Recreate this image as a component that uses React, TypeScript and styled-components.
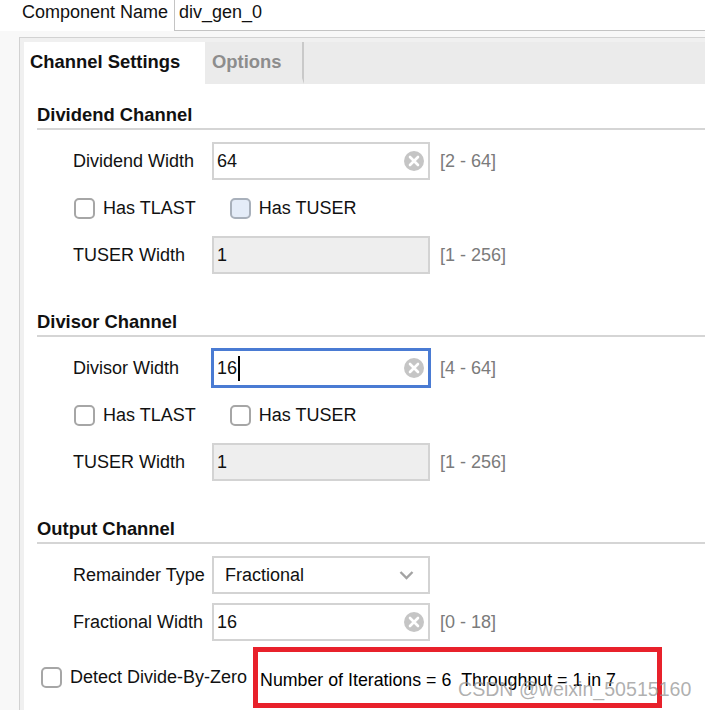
import React from "react";
import styled, { createGlobalStyle } from "styled-components";

const GlobalStyle = createGlobalStyle`
  html, body {
    margin: 0;
    padding: 0;
    background: #f8f8f8;
  }
  body {
    font-family: "Liberation Sans", Arial, sans-serif;
    color: #111;
  }
`;

const Page = styled.div`
  position: relative;
  width: 705px;
  height: 710px;
  overflow: hidden;
  background: #f8f8f8;
`;

const NameRow = styled.div`
  display: flex;
  height: 31px;
  background: #fff;
`;

const NameLabel = styled.div`
  width: 152px;
  padding: 1px 0 0 22px;
  font-size: 18px;
  line-height: 22px;
  white-space: nowrap;
`;

const NameInput = styled.div`
  flex: 1;
  box-sizing: border-box;
  border-left: 1px solid #c4c4c4;
  border-bottom: 1px solid #c4c4c4;
  padding: 1px 0 0 4px;
  font-size: 18px;
  line-height: 22px;
  background: #fff;
`;

const Frame = styled.div`
  margin: 6px 0 0 19px;
  height: 700px;
  border-top: 1px solid #d2d2d2;
  border-left: 1px solid #d2d2d2;
  padding: 4px 0 0 4px;
  background: #f0f0f0;
`;

const TabBar = styled.div`
  display: flex;
  height: 42px;
  background: #ebebeb;
`;

const Tab = styled.div<{ $active?: boolean; $width: number }>`
  width: ${(p) => p.$width}px;
  box-sizing: border-box;
  padding-left: ${(p) => (p.$active ? 6 : 7)}px;
  font-size: 18.4px;
  font-weight: bold;
  line-height: 40px;
  white-space: nowrap;
  background: ${(p) => (p.$active ? "#fff" : "#ebebeb")};
  color: ${(p) => (p.$active ? "#111" : "#8d8d8d")};
  border-right: ${(p) => (p.$active ? "none" : "2px solid #c9c9c9")};
  border-bottom: ${(p) => (p.$active ? "none" : "6px solid #ebebeb")};
`;

const Content = styled.div`
  background: #fff;
  height: 640px;
  padding-left: 13px;
`;

const Section = styled.div`
  padding-top: 37px;
  &:first-child {
    padding-top: 20px;
  }
`;

const Heading = styled.h3`
  margin: 0;
  font-size: 18.4px;
  font-weight: bold;
  line-height: 22px;
  padding-bottom: 2px;
  border-bottom: 2px solid #d5d5d5;
`;

const Fields = styled.div<{ $gap: number }>`
  display: flex;
  flex-direction: column;
  gap: ${(p) => p.$gap}px;
  margin-top: 12px;
  padding-left: 36px;
`;

const FieldRow = styled.div`
  display: flex;
  align-items: center;
  height: 38px;
`;

const Label = styled.div`
  width: 139px;
  font-size: 18px;
  white-space: nowrap;
`;

const Box = styled.div<{ $disabled?: boolean; $focused?: boolean }>`
  display: flex;
  align-items: center;
  box-sizing: border-box;
  width: 218px;
  height: 38px;
  padding: 0 4px 0 3px;
  font-size: 18px;
  border: 2px solid ${(p) => (p.$focused ? "#4a7bd3" : "#d3d3d3")};
  outline: ${(p) => (p.$focused ? "1px solid #4a7bd3" : "none")};
  background: ${(p) => (p.$disabled ? "#eeeeee" : "#fff")};
`;

const SelectBox = styled(Box)`
  padding: 0 14px 0 11px;
  justify-content: space-between;
`;

const Caret = styled.span`
  display: inline-block;
  width: 2px;
  height: 25px;
  background: #000;
  margin-left: 1px;
`;

const ClearIcon = styled.svg`
  margin-left: auto;
  flex: none;
`;

const Range = styled.div`
  margin-left: 10px;
  font-size: 18px;
  color: #7b7b7b;
  white-space: nowrap;
`;

const CheckRow = styled.div`
  display: flex;
  align-items: center;
  gap: 34px;
  height: 36px;
  padding-left: 1px;
`;

const CheckItem = styled.label`
  display: flex;
  align-items: center;
  gap: 8px;
  font-size: 18px;
  white-space: nowrap;
`;

const CheckBox = styled.span<{ $hover?: boolean }>`
  display: inline-block;
  box-sizing: border-box;
  width: 21px;
  height: 21px;
  border: 2px solid ${(p) => (p.$hover ? "#a8b0bb" : "#a6a6a6")};
  border-radius: 5px;
  background: ${(p) => (p.$hover ? "#e4ecf8" : "#fff")};
`;

const BottomRow = styled.div`
  display: flex;
  align-items: center;
  margin-top: 6px;
  padding-left: 4px;
  height: 61px;
`;

const Note = styled.div`
  display: flex;
  align-items: center;
  box-sizing: border-box;
  width: 409px;
  height: 61px;
  margin-left: 6px;
  padding: 5px 0 0 2px;
  border: 5px solid #e8212b;
  font-size: 17.8px;
  color: #000;
  white-space: nowrap;
`;

const Watermark = styled.div`
  position: absolute;
  left: 458px;
  top: 678px;
  font-size: 19.6px;
  color: rgba(150, 150, 150, 0.75);
  white-space: nowrap;
`;

const Clear = () => (
  <ClearIcon width="20" height="20" viewBox="0 0 20 20">
    <circle cx="10" cy="10" r="10" fill="#c5c5c5" />
    <path d="M6 6 L14 14 M14 6 L6 14" stroke="#fff" strokeWidth="2.6" strokeLinecap="round" />
  </ClearIcon>
);

const Chevron = () => (
  <svg width="15" height="10" viewBox="0 0 15 10">
    <path d="M1.5 2 L7.5 8 L13.5 2" fill="none" stroke="#a3a3a3" strokeWidth="2.4" />
  </svg>
);

type ChannelProps = {
  title: string;
  width: string;
  value: string;
  range: string;
  focused?: boolean;
  hoverTuser?: boolean;
};

const Channel = ({ title, width, value, range, focused, hoverTuser }: ChannelProps) => (
  <Section>
    <Heading>{title}</Heading>
    <Fields $gap={10}>
      <FieldRow>
        <Label>{width}</Label>
        <Box $focused={focused}>
          {value}
          {focused && <Caret />}
          <Clear />
        </Box>
        <Range>{range}</Range>
      </FieldRow>
      <CheckRow>
        <CheckItem>
          <CheckBox />
          Has TLAST
        </CheckItem>
        <CheckItem>
          <CheckBox $hover={hoverTuser} />
          Has TUSER
        </CheckItem>
      </CheckRow>
      <FieldRow>
        <Label>TUSER Width</Label>
        <Box $disabled>1</Box>
        <Range>[1 - 256]</Range>
      </FieldRow>
    </Fields>
  </Section>
);

export default function App() {
  return (
    <Page>
      <GlobalStyle />
      <NameRow>
        <NameLabel>Component Name</NameLabel>
        <NameInput>div_gen_0</NameInput>
      </NameRow>
      <Frame>
        <TabBar>
          <Tab $active $width={181}>Channel Settings</Tab>
          <Tab $width={99}>Options</Tab>
        </TabBar>
        <Content>
          <Channel title="Dividend Channel" width="Dividend Width" value="64" range="[2 - 64]" hoverTuser />
          <Channel title="Divisor Channel" width="Divisor Width" value="16" range="[4 - 64]" focused />
          <Section>
            <Heading>Output Channel</Heading>
            <Fields $gap={9}>
              <FieldRow>
                <Label>Remainder Type</Label>
                <SelectBox>
                  Fractional
                  <Chevron />
                </SelectBox>
              </FieldRow>
              <FieldRow>
                <Label>Fractional Width</Label>
                <Box>
                  16
                  <Clear />
                </Box>
                <Range>[0 - 18]</Range>
              </FieldRow>
            </Fields>
          </Section>
          <BottomRow>
            <CheckItem>
              <CheckBox />
              Detect Divide-By-Zero
            </CheckItem>
            <Note>Number of Iterations = 6&nbsp;&nbsp;Throughput = 1 in 7</Note>
          </BottomRow>
        </Content>
      </Frame>
      <Watermark>CSDN @weixin_50515160</Watermark>
    </Page>
  );
}
